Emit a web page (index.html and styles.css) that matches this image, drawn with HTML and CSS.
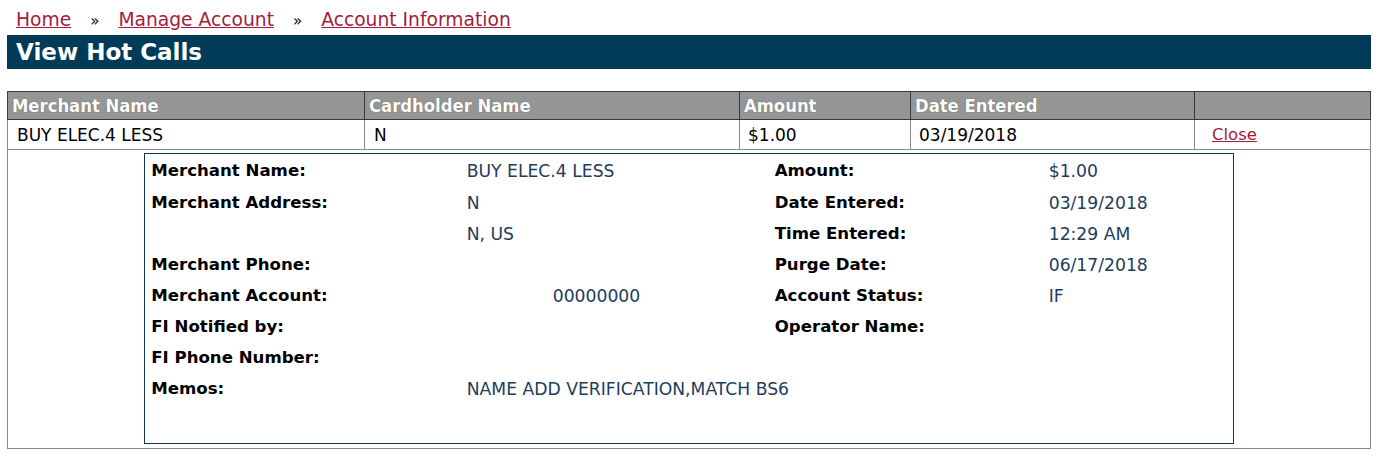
FILE: index.html
```html
<!DOCTYPE html>
<html>
<head>
<meta charset="utf-8">
<title>View Hot Calls</title>
<link rel="stylesheet" href="styles.css">
</head>
<body>
<nav class="crumbs">
  <a href="#">Home</a><span class="sep">»</span><a href="#">Manage Account</a><span class="sep">»</span><a href="#">Account Information</a>
</nav>
<h1 class="title">View Hot Calls</h1>
<table class="calls">
  <colgroup>
    <col class="c1"><col class="c2"><col class="c3"><col class="c4"><col class="c5">
  </colgroup>
  <thead>
    <tr>
      <th>Merchant Name</th>
      <th>Cardholder Name</th>
      <th>Amount</th>
      <th>Date Entered</th>
      <th></th>
    </tr>
  </thead>
  <tbody>
    <tr class="row">
      <td>BUY ELEC.4 LESS</td>
      <td>N</td>
      <td>$1.00</td>
      <td>03/19/2018</td>
      <td class="action"><a href="#">Close</a></td>
    </tr>
    <tr class="detail-row">
      <td colspan="5">
        <table class="detail">
          <colgroup>
            <col class="d1"><col class="d2"><col class="d3"><col class="d4">
          </colgroup>
          <tr><th>Merchant Name:</th><td>BUY ELEC.4 LESS</td><th>Amount:</th><td>$1.00</td></tr>
          <tr><th>Merchant Address:</th><td>N</td><th>Date Entered:</th><td>03/19/2018</td></tr>
          <tr><th></th><td>N, US</td><th>Time Entered:</th><td>12:29 AM</td></tr>
          <tr><th>Merchant Phone:</th><td></td><th>Purge Date:</th><td>06/17/2018</td></tr>
          <tr><th>Merchant Account:</th><td class="acct">00000000</td><th>Account Status:</th><td>IF</td></tr>
          <tr><th>FI Notified by:</th><td></td><th>Operator Name:</th><td></td></tr>
          <tr><th>FI Phone Number:</th><td></td><th></th><td></td></tr>
          <tr><th>Memos:</th><td colspan="3">NAME ADD VERIFICATION,MATCH BS6</td></tr>
          <tr class="spacer"><th></th><td colspan="3"></td></tr>
        </table>
      </td>
    </tr>
  </tbody>
</table>
</body>
</html>
```
FILE: styles.css
```css
html, body {
  margin: 0;
  padding: 0;
  background: #ffffff;
}
body {
  padding: 0 7px;
  font-family: "DejaVu Sans", Verdana, sans-serif;
  color: #000;
}
.crumbs {
  height: 35px;
  box-sizing: border-box;
  padding: 7px 0 0 9px;
  font-size: 18.7px;
  line-height: 26px;
  color: #000;
}
.crumbs a {
  color: #a31c3b;
  text-decoration: underline;
}
.crumbs .sep {
  display: inline-block;
  padding: 0 19px;
  font-size: 15px;
}
.title {
  margin: 0;
  height: 34px;
  background: #003c58;
  color: #ffffff;
  font-size: 23px;
  font-weight: bold;
  line-height: 35px;
  padding-left: 9px;
}
.calls {
  margin-top: 22px;
  width: 100%;
  border-collapse: collapse;
  border: 1px solid #8a8a8a;
}
.c1 { width: 357px; }
.c2 { width: 375px; }
.c3 { width: 171px; }
.c4 { width: 284px; }
.c5 { width: auto; }
.calls thead th {
  background: #959796;
  color: #ffffff;
  font-family: "DejaVu Sans Condensed", "DejaVu Sans", sans-serif;
  font-weight: bold;
  font-size: 18.3px;
  text-align: left;
  height: 27px;
  padding: 0 4px;
  border: 1px solid #3a3a3a;
  text-shadow: 0 0 1px #555;
}
.calls .row td {
  font-family: "DejaVu Sans", Verdana, sans-serif;
  font-size: 17px;
  height: 29px;
  padding: 0 9px;
  border: 1px solid #8a8a8a;
  color: #000;
}
.calls .row td:nth-child(3),
.calls .row td:nth-child(4) {
  padding-left: 8px;
}
.calls .row td.action {
  padding-left: 17px;
  font-size: 16.5px;
}
.action a {
  color: #a31c3b;
}
.detail-row > td {
  padding: 3px 0 4px;
  border: 1px solid #8a8a8a;
}
.detail {
  width: 80%;
  margin: 0 auto;
  border-collapse: collapse;
  border: 1px solid #0d3a52;
  table-layout: fixed;
}
.d1 { width: 316px; }
.d2 { width: 308px; }
.d3 { width: 274px; }
.d4 { width: auto; }
.detail th, .detail td {
  height: 31px;
  padding: 0 6px;
  text-align: left;
  vertical-align: middle;
}
.detail th {
  font-family: "DejaVu Sans", Verdana, sans-serif;
  font-size: 16.6px;
  font-weight: bold;
  color: #000;
}
.detail td {
  font-family: "DejaVu Sans", Verdana, sans-serif;
  font-size: 17.2px;
  color: #1d3d5a;
}
.detail td.acct {
  padding-left: 92px;
}
.detail tr:first-child th, .detail tr:first-child td {
  height: 33px;
}
.detail .spacer th, .detail .spacer td {
  height: 39px;
}
```
